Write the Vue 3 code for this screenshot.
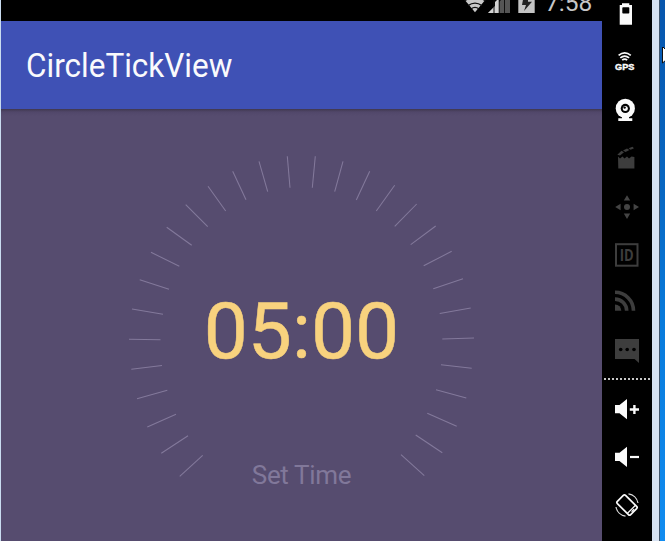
<script setup>
// Each tick: outer x, outer y, inner x, inner y
const ticks = [
  [287.3, 156.3, 290, 187.7], [259, 161.3, 267.7, 191.7], [232.7, 171.3, 246, 199.7],
  [208, 186.3, 225.7, 211], [185.7, 204.7, 207.7, 226.7], [166.7, 227.3, 191.7, 245.3],
  [151, 252.3, 179.3, 266.3], [139.7, 279.7, 169, 289.3], [132, 309, 163, 314.3],
  [129, 339.2, 160.5, 339.8], [131.3, 369.3, 162, 365.4], [137, 398.7, 167.3, 390.3],
  [147.3, 427, 176, 414.3], [161.3, 453.3, 188, 435.7], [179.7, 476.3, 202.7, 455.3],
  [315.3, 156.3, 312.3, 187.7], [343, 161.3, 334.7, 191.7], [369.7, 171.3, 356.3, 200],
  [394.7, 185.3, 376.3, 211], [416.7, 204, 394.7, 226.3], [435.7, 226, 410.7, 244.7],
  [451.7, 251.3, 423.7, 265.7], [463, 278.7, 433.3, 288.7], [470.7, 308, 439.7, 313.4],
  [474, 338, 442.3, 339], [471.7, 368.3, 441, 364.7], [466.3, 398, 436, 389.7],
  [456.7, 426.3, 427.3, 413.3], [442.3, 452.7, 415.7, 435], [424.3, 475.7, 401, 454.7],
]
</script>

<template>
  <div class="window">
    <main class="phone">
      <div class="status">
        <svg class="status-icons" width="76" height="21" viewBox="460 0 76 21">
          <path d="M475 12.3L459 -7H491Z" fill="#c9c9c9" />
          <g fill="none" stroke="#111" stroke-width="1.3">
            <path d="M468 5.6Q475 .6 482 5.6M464.500 .8Q475 -6 485.500 .8M471 9Q475 5.800 479 9" />
          </g>
          <path d="M488 13L510 -9V13Z" fill="#555" />
          <path d="M488 13L499 2V13Z" fill="#d2d2d2" />
          <path d="M499 2L499 13H495V-2H499Z" fill="#d2d2d2" />
          <path d="M488 9L499 -2H488Z" fill="#000" />
          <path d="M494 -2V13M499.200 -2V13M504.500 -2V13" stroke="#111" stroke-width="1" />
          <path d="M518.300 -2H534.700V13H518.300Z" fill="#c4c4c4" />
          <path d="M523.500 -3L522 5H526L524 11L532 1.800H528V-3Z" fill="#222" />
        </svg>
        <span class="clock">7:58</span>
      </div>
      <header class="appbar"><h1>CircleTickView</h1></header>
      <section class="content">
        <svg class="dial" width="601" height="432" viewBox="1 109 601 432">
          <line v-for="(t, i) in ticks" :key="i" :x1="t[0]" :y1="t[1]" :x2="t[2]" :y2="t[3]" />
        </svg>
        <div class="readout">
          <div class="time">05:00</div>
          <div class="label">Set Time</div>
        </div>
      </section>
    </main>

    <aside class="tools">
      <svg viewBox="0 0 50 48">
        <path d="M20 13.300H27.300V15H30V34.700H17.700V15H20Z" fill="#fafafa" />
        <rect x="20.300" y="17.300" width="7" height="6.300" rx=".8" fill="#000" />
      </svg>
      <svg viewBox="0 0 50 48">
        <g fill="none" stroke="#fafafa" stroke-width="1.700">
          <path d="M16.600 17.300Q22.700 12.400 28.800 17.300M18.300 19.900Q22.700 16.200 27.100 19.900M20.200 22.200Q22.700 20 25.200 22.200" />
        </g>
        <text class="gps" x="22.700" y="31.900" text-anchor="middle" textLength="19.300" lengthAdjust="spacingAndGlyphs">GPS</text>
      </svg>
      <svg viewBox="0 0 50 48">
        <circle cx="23.300" cy="22.400" r="9.600" fill="#fafafa" />
        <circle cx="23.300" cy="22.400" r="4.600" fill="#000" />
        <circle cx="23.300" cy="22.600" r="2.500" fill="#fafafa" />
        <circle cx="22.600" cy="21.600" r="1.200" fill="#000" />
        <path d="M20 30H27V32.300H30.300V35H16.300V32.300H20Z" fill="#fafafa" />
      </svg>
      <svg viewBox="0 0 50 48">
        <path d="M16 22.600L18 24.500L20.500 22.600L22.500 24.500L25 22.600L27 24.500L29.500 22.600L32.400 23V34.600H16.300Z" fill="#3d3d3d" />
        <path d="M15.300 20.800L19.500 16.800L22 18.300L18 21.600ZM21 16.400L25 14.400L27.500 16L23.500 18ZM26.600 14.200L30.500 12.800L32 14.200L28.600 15.700Z" fill="#3d3d3d" />
      </svg>
      <svg viewBox="0 0 50 48">
        <path d="M25 13.200L28.200 18.600H21.800ZM25 37L21.800 31.600H28.200ZM13.200 25L18.600 21.800V28.200ZM37 25L31.600 21.800V28.200Z" fill="#444" />
        <circle cx="25" cy="25" r="3" fill="#444" />
      </svg>
      <svg viewBox="0 0 50 48">
        <rect x="14" y="14.200" width="21.500" height="21.500" fill="none" stroke="#3d3d3d" stroke-width="2" />
        <text class="id" x="24.800" y="30.600" text-anchor="middle" textLength="14" lengthAdjust="spacingAndGlyphs">ID</text>
      </svg>
      <svg viewBox="0 0 50 48">
        <path d="M13 14.500A18.500 18.500 0 0 1 31.500 33M13 21.300A11.700 11.700 0 0 1 24.700 33" transform="translate(0 -.2)" fill="none" stroke="#3d3d3d" stroke-width="3.600" />
        <path d="M13 26.500A6.300 6.300 0 0 1 19.300 32.800H13Z" fill="#3d3d3d" />
      </svg>
      <svg viewBox="0 0 50 48">
        <path d="M13 13H37V37L32.500 33H13Z" fill="#3d3d3d" />
        <g fill="#000"><circle cx="18.700" cy="23.500" r="1.800" /><circle cx="25.200" cy="23.500" r="1.800" /><circle cx="32" cy="23.500" r="1.800" /></g>
      </svg>
      <div class="divider"></div>
      <svg viewBox="0 0 50 48">
        <path d="M13 20H17.500L25 14V34.300L17.500 28.300H13Z" fill="#fafafa" />
        <path d="M27.800 24.500H37M32.400 20V29" stroke="#fafafa" stroke-width="2.400" />
      </svg>
      <svg viewBox="0 0 50 48">
        <path d="M13 19.700H17.500L25 13.700V34L17.500 28H13Z" fill="#fafafa" />
        <path d="M28 24H37" stroke="#fafafa" stroke-width="2.200" />
      </svg>
      <svg viewBox="0 0 50 48">
        <g transform="rotate(-45 25 24)" fill="none" stroke="#fafafa">
          <rect x="19.200" y="14.600" width="11.600" height="18.800" rx="1.600" stroke-width="1.700" />
          <path d="M19.500 30.200H30.500M23.500 32H27" stroke-width="1.200" />
        </g>
        <path d="M26.500 12.800A11.300 11.300 0 0 1 36 22M23.500 35.200A11.300 11.300 0 0 1 14 26" fill="none" stroke="#ddd" stroke-width="1.200" />
      </svg>
    </aside>
    <div class="frame"></div>
    <div class="desktop">
      <svg class="cursor" width="5" height="18" viewBox="0 0 5 18">
        <path d="M2.500 -.5V16L6 13V3Z" fill="#fff" stroke="#111" />
      </svg>
    </div>
  </div>
</template>

<style>
body { margin: 0; overflow: hidden; }
</style>

<style scoped>
.window {
  display: flex;
  box-sizing: border-box;
  width: 665px;
  height: 541px;
  overflow: hidden;
  border-left: 1px solid #c9dcf0;
  font-family: Roboto, "Liberation Sans", sans-serif;
}
.phone { width: 601px; display: flex; flex-direction: column; }
.status {
  display: flex;
  justify-content: flex-end;
  height: 21px;
  padding-right: 9px;
  overflow: hidden;
  background: #000;
}
.status-icons { margin-right: 9px; flex: none; }
.clock { width: 48px; margin-top: -11px; font-size: 24.500px; line-height: 28px; color: #c6c6c6; white-space: nowrap; }
.appbar {
  display: flex;
  align-items: center;
  height: 88px;
  padding-left: 25px;
  box-sizing: border-box;
  background: #3f51b5;
}
h1 { margin: 4px 0 0; font-size: 31.500px; line-height: 40px; font-weight: 400; color: #fafafc; white-space: nowrap; transform: scaleY(1.03); }
.content {
  display: grid;
  height: 432px;
  background: linear-gradient(#40384f, #51476a 3px, #564c6f 7px);
}
.dial { grid-area: 1 / 1; display: block; }
.dial line { stroke: #83799b; stroke-width: 1.050; }
.readout { grid-area: 1 / 1; display: flex; flex-direction: column; align-items: center; }
.time { margin-top: 174px; font-size: 78.500px; line-height: 96px; color: #f8d27e; -webkit-text-stroke: .5px #f8d27e; }
.label { margin-top: 80px; font-size: 26px; line-height: 32px; letter-spacing: -.35px; color: #81789a; }
.tools { width: 50px; flex: none; background: #000; }
.tools svg { display: block; width: 50px; height: 48px; }
.tools svg:first-child { margin-top: -10px; }
.gps { font: 700 8.500px "Liberation Sans", sans-serif; fill: #fafafa; stroke: #fafafa; stroke-width: .4px; }
.id { font: 700 15.500px "Open Sans", sans-serif; fill: #3d3d3d; }
.divider {
  height: 2px;
  margin: 4px 2px 5px;
  background: repeating-linear-gradient(90deg, #c8c8c8 0 2px, #000 2px 4px);
}
.frame { width: 7px; box-sizing: border-box; flex: none; background: #d6e1f1; }
.desktop {
  flex: 1;
  border-left: 1px solid #43566c;
  background: linear-gradient(#0756ad, #0867c2 35%, #087bdc 60%, #118cf0);
}
.cursor { display: block; margin-top: 47px; }
</style>
